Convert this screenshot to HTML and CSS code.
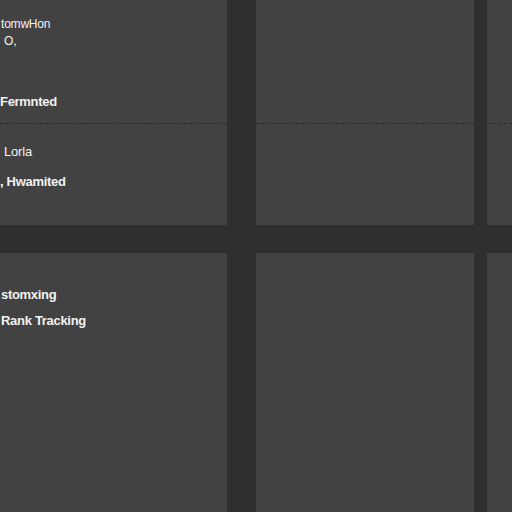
FILE: index.html
```html
<!DOCTYPE html>
<html>
<head>
  <title>Rank Tracking</title>
  <link rel="stylesheet" href="styles.css">
</head>
<body>
  <div class="board">
    <!-- top row -->
    <div class="panel panel-a">
      <div class="panel-head">
        <p class="label">tomwHon</p>
        <p class="label small">O,</p>
        <p class="label title">Fermnted</p>
      </div>
      <div class="panel-body">
        <p class="label light">Lorla</p>
        <p class="label title">, Hwamited</p>
      </div>
    </div>
    <div class="panel panel-b">
      <div class="panel-head"></div>
    </div>
    <div class="panel panel-c">
      <div class="panel-head"></div>
    </div>

    <!-- bottom row -->
    <div class="panel panel-d">
      <div class="panel-body tall">
        <p class="label title">stomxing</p>
        <p class="label title">Rank Tracking</p>
      </div>
    </div>
    <div class="panel panel-e"></div>
    <div class="panel panel-f"></div>
  </div>
</body>
</html>
```

FILE: styles.css
```css
body {
  margin: 0;
  padding: 0;
  background-color: #2f2f2f;
  font-family: "Liberation Sans", Arial, sans-serif;
  color: #f2f2f2;
  overflow: hidden;
}

.board {
  display: grid;
  grid-template-columns: 227px 29px 218px 13px 25px;
  grid-template-rows: 225px 28px 259px;
  width: 512px;
  height: 512px;
}

.panel {
  background-color: #424242;
  overflow: hidden;
}

.panel-a { grid-column: 1; grid-row: 1; }
.panel-b { grid-column: 3; grid-row: 1; }
.panel-c { grid-column: 5; grid-row: 1; }
.panel-d { grid-column: 1; grid-row: 3; }
.panel-e { grid-column: 3; grid-row: 3; }
.panel-f { grid-column: 5; grid-row: 3; }

.panel-head {
  height: 124px;
  box-sizing: border-box;
  padding-top: 16px;
  border-bottom: 1px dashed #2b2b2b;
}

.panel-body {
  padding-top: 20px;
}

.panel-body.tall {
  padding-top: 34px;
}

.label {
  margin: 0 0 0 1px;
  font-size: 12px;
  line-height: 17px;
  white-space: nowrap;
  letter-spacing: -0.2px;
}

.label.small {
  margin-left: 4px;
}

.label.title {
  font-size: 13px;
  font-weight: bold;
  line-height: 16px;
  margin-top: 44px;
  margin-left: 0;
  letter-spacing: -0.3px;
}

.panel-body .label.title {
  margin-top: 14px;
}

.panel-body .label.light {
  font-size: 13px;
  line-height: 16px;
  margin-left: 4px;
}

.panel-body.tall .label.title:first-child {
  margin-top: 0;
}

.panel-body.tall .label.title {
  margin-top: 10px;
  margin-left: 1px;
}
```
